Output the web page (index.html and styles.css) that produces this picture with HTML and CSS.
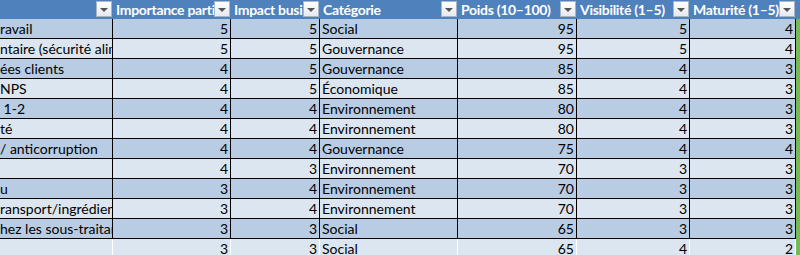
FILE: index.html
```html
<!DOCTYPE html>
<html lang="fr">
<head>
<meta charset="utf-8">
<title>Tableau des enjeux</title>
<link rel="stylesheet" href="styles.css">
</head>
<body>
<div class="sheet">
  <div class="row head">
    <div class="hc"><span class="label"></span><span class="dd"></span></div>
    <div class="hc"><span class="label">Importance parties prenantes</span><span class="dd"></span></div>
    <div class="hc"><span class="label">Impact business</span><span class="dd"></span></div>
    <div class="hc"><span class="label">Catégorie</span><span class="dd"></span></div>
    <div class="hc"><span class="label">Poids (10–100)</span><span class="dd"></span></div>
    <div class="hc"><span class="label">Visibilité (1–5)</span><span class="dd"></span></div>
    <div class="hc"><span class="label">Maturité (1–5)</span><span class="dd"></span></div>
    <div class="hc edge"></div>
  </div>

  <div class="row dark">
    <div class="c t first">ravail</div><div class="c n">5</div><div class="c n">5</div><div class="c t">Social</div><div class="c n">95</div><div class="c n">5</div><div class="c n">4</div><div class="g"></div>
  </div>
  <div class="row light">
    <div class="c t first">ntaire (sécurité alimentaire)</div><div class="c n">5</div><div class="c n">5</div><div class="c t">Gouvernance</div><div class="c n">95</div><div class="c n">5</div><div class="c n">4</div><div class="g"></div>
  </div>
  <div class="row dark">
    <div class="c t first">ées clients</div><div class="c n">4</div><div class="c n">5</div><div class="c t">Gouvernance</div><div class="c n">85</div><div class="c n">4</div><div class="c n">3</div><div class="g"></div>
  </div>
  <div class="row light">
    <div class="c t first">NPS</div><div class="c n">4</div><div class="c n">5</div><div class="c t">Économique</div><div class="c n">85</div><div class="c n">4</div><div class="c n">3</div><div class="g"></div>
  </div>
  <div class="row dark">
    <div class="c t first">&nbsp;1-2</div><div class="c n">4</div><div class="c n">4</div><div class="c t">Environnement</div><div class="c n">80</div><div class="c n">4</div><div class="c n">3</div><div class="g"></div>
  </div>
  <div class="row light">
    <div class="c t first">té</div><div class="c n">4</div><div class="c n">4</div><div class="c t">Environnement</div><div class="c n">80</div><div class="c n">4</div><div class="c n">3</div><div class="g"></div>
  </div>
  <div class="row dark">
    <div class="c t first">/ anticorruption</div><div class="c n">4</div><div class="c n">4</div><div class="c t">Gouvernance</div><div class="c n">75</div><div class="c n">4</div><div class="c n">4</div><div class="g"></div>
  </div>
  <div class="row light">
    <div class="c t first"></div><div class="c n">4</div><div class="c n">3</div><div class="c t">Environnement</div><div class="c n">70</div><div class="c n">3</div><div class="c n">3</div><div class="g"></div>
  </div>
  <div class="row dark">
    <div class="c t first">u</div><div class="c n">3</div><div class="c n">4</div><div class="c t">Environnement</div><div class="c n">70</div><div class="c n">3</div><div class="c n">3</div><div class="g"></div>
  </div>
  <div class="row light">
    <div class="c t first">ransport/ingrédients</div><div class="c n">3</div><div class="c n">4</div><div class="c t">Environnement</div><div class="c n">70</div><div class="c n">3</div><div class="c n">3</div><div class="g"></div>
  </div>
  <div class="row dark">
    <div class="c t first">hez les sous-traitants</div><div class="c n">3</div><div class="c n">3</div><div class="c t">Social</div><div class="c n">65</div><div class="c n">3</div><div class="c n">3</div><div class="g"></div>
  </div>
  <div class="row light last">
    <div class="c t first"></div><div class="c n">3</div><div class="c n">3</div><div class="c t">Social</div><div class="c n">65</div><div class="c n">4</div><div class="c n">2</div><div class="g"></div>
  </div>
</div>
</body>
</html>
```

FILE: styles.css
```css
html, body {
  margin: 0;
  padding: 0;
  background: #ffffff;
  overflow: hidden;
}

.sheet {
  width: 800px;
  font-family: Lato, "Liberation Sans", sans-serif;
  font-size: 14px;
  color: #000000;
}

.row {
  display: grid;
  grid-template-columns: 113px 118px 89px 138px 119px 113px 106px 4px;
  height: 20px;
}

.row.head {
  height: 19px;
  background: #4f81bd;
}

.hc {
  display: flex;
  align-items: flex-start;
  border-right: 1px solid #4f81bd;
  overflow: hidden;
  min-width: 0;
}

.hc.edge {
  border-right: none;
}

.label {
  flex: 1;
  min-width: 0;
  overflow: hidden;
  white-space: nowrap;
  color: #ffffff;
  font-weight: bold;
  letter-spacing: -0.3px;
  line-height: 19px;
  padding-left: 3px;
}

.dd {
  flex: none;
  width: 14px;
  height: 14px;
  margin-top: 1px;
  border: 1px solid #a9b6c6;
  background: linear-gradient(#ffffff, #e6e9ee);
  display: flex;
  align-items: center;
  justify-content: center;
}

.dd::after {
  content: "";
  width: 0;
  height: 0;
  border-left: 4px solid transparent;
  border-right: 4px solid transparent;
  border-top: 4px solid #555555;
  margin-top: 1px;
}

.c {
  border-right: 1px solid #000000;
  border-bottom: 1px solid #000000;
  white-space: nowrap;
  overflow: hidden;
  line-height: 19px;
  min-width: 0;
}

.c.t {
  padding-left: 2px;
}

.c.t.first {
  padding-left: 0;
}

.c.n {
  text-align: right;
  padding-right: 2px;
}

.dark .c {
  background: #b8cce4;
}

.light .c {
  background: #dce6f1;
}

.last .c {
  border-right-color: #ffffff;
  border-bottom: none;
}

.g {
  background: #74bb55;
}
```
